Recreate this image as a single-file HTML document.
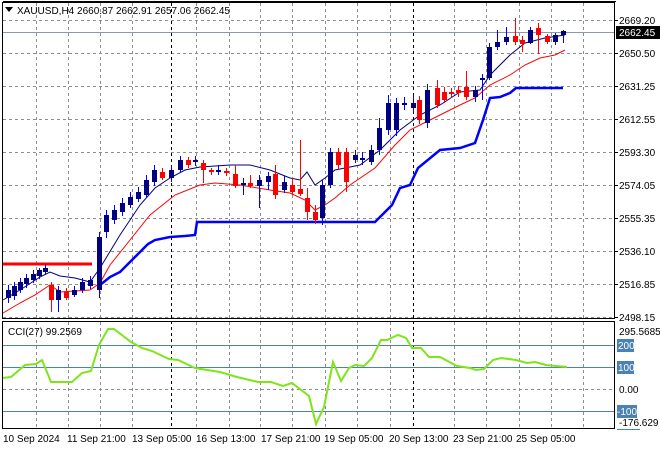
<!DOCTYPE html><html><head><style>
body{margin:0;background:#fff;width:660px;height:450px;overflow:hidden;font-family:"Liberation Sans",sans-serif}
svg text{font-family:"Liberation Sans",sans-serif;font-size:10px;fill:#000}
</style></head><body>
<svg id="s" width="660" height="450" xmlns="http://www.w3.org/2000/svg">
<rect width="660" height="450" fill="#fff"/>
<g id="grid" stroke="#8a8f96" stroke-dasharray="3,3" stroke-width="1"></g>
<line x1="3" y1="32.5" x2="614" y2="32.5" stroke="#8899aa"/>
<line x1="171.5" y1="3" x2="171.5" y2="429" stroke="#000" stroke-dasharray="3,3"/>
<line x1="413.5" y1="3" x2="413.5" y2="429" stroke="#000" stroke-dasharray="3,3"/>
<g stroke="#4a82b4"><line x1="3" y1="345.5" x2="614" y2="345.5"/><line x1="3" y1="367.5" x2="614" y2="367.5"/><line x1="3" y1="411.5" x2="614" y2="411.5"/></g>
<line x1="3" y1="264" x2="92" y2="264" stroke="#f00" stroke-width="3"/>
<polyline fill="none" stroke="#00f" stroke-width="2.5" points="100,285 110,277 120,272 130,262 140,252 148,244 155,240 170,237 185,236 195,235 197,222 375,222 382,215 392,205 400,188 410,185 418,168 440,150 460,148 475,143 483,120 490,98 500,97 510,93 516,88 563,88"/>
<polyline fill="none" stroke="#000080" stroke-width="1" points="3,300 20,290 40,277 50,272 60,276 75,278 90,282 100,268 120,235 140,205 155,188 170,178 185,170 200,167 230,165 250,165 270,170 290,178 300,180 307,172 315,185 325,178 335,170 360,165 380,150 400,130 420,115 440,105 460,92 480,90 490,75 510,55 525,43 545,38 565,35"/>
<polyline fill="none" stroke="#f00" stroke-width="1" points="3,313 20,303 35,295 50,285 60,292 90,290 100,283 110,265 130,240 150,215 175,195 200,185 215,183 240,185 270,190 290,193 305,200 315,210 325,205 335,198 350,185 375,168 395,145 410,130 430,120 460,105 475,98 490,85 510,75 525,65 540,58 555,55 565,50"/>
<g id="c"></g>
<polyline fill="none" stroke="#7fe51a" stroke-width="2" points="2,378 11,377 25,365 36,364 42,360 51,382 72,382 82,373 91,371 99,345 108,329 114,329 131,342 142,348 152,351 169,359 178,360 195,368 220,372 237,377 258,382 271,382 283,386 292,383 309,396 316,424 324,407 333,362 341,381 349,368 355,365 364,366 372,358 381,340 387,340 398,335 406,338 412,348 421,348 429,357 440,357 457,366 470,368 476,370 484,369 493,360 501,358 516,360 527,363 535,362 546,365 567,367"/>
<g fill="none" stroke="#000"><rect x="2.5" y="2.5" width="612" height="316"/><rect x="2.5" y="321.5" width="612" height="107"/></g>
<rect x="3" y="1" width="613" height="1" fill="#000"/>
<polygon points="5,7 13,7 9,12" fill="#000"/>
<text x="17" y="14">XAUUSD,H4  2660.87 2662.91 2657.06 2662.45</text>
<text x="8" y="335">CCI(27) 99.2569</text>
<g id="ax"></g>
<rect x="616" y="26" width="44" height="13" fill="#000"/>
<text x="619" y="36" style="fill:#fff">2662.45</text>
<g>
<text x="619" y="335">295.5685</text>
<rect x="617" y="339" width="17" height="13" fill="#4a82b4"/><text x="618" y="349" style="fill:#fff">200</text>
<rect x="617" y="361" width="17" height="13" fill="#4a82b4"/><text x="618" y="371" style="fill:#fff">100</text>
<text x="619" y="393">0.00</text>
<rect x="617" y="405" width="20" height="13" fill="#4a82b4"/><text x="617" y="415" style="fill:#fff">-100</text>
<text x="619" y="426">-176.629</text>
<line x1="617" y1="429.5" x2="640" y2="429.5" stroke="#4a82b4"/>
</g>
<g>
<text x="3" y="442">10 Sep 2024</text><text x="67" y="442">11 Sep 21:00</text><text x="132" y="442">13 Sep 05:00</text><text x="196" y="442">16 Sep 13:00</text><text x="261" y="442">17 Sep 21:00</text><text x="324" y="442">19 Sep 05:00</text><text x="389" y="442">20 Sep 13:00</text><text x="453" y="442">23 Sep 21:00</text><text x="516" y="442">25 Sep 05:00</text>
</g>
</svg>
<script>
var NS="http://www.w3.org/2000/svg";
function el(p,t,a){var e=document.createElementNS(NS,t);for(var k in a)e.setAttribute(k,a[k]);p.appendChild(e);return e;}
var g=document.getElementById('grid');
var hs=[20,53,86,119,152,185,218,251,284,317];
hs.forEach(function(y){el(g,'line',{x1:3,y1:y+.5,x2:614,y2:y+.5});});
el(g,'line',{x1:3,y1:389.5,x2:614,y2:389.5});
var vs=[36,68,100,132,196,229,260,292,325,357,390,454,486,519,551,583];
vs.forEach(function(x){el(g,'line',{x1:x+.5,y1:3,x2:x+.5,y2:318});el(g,'line',{x1:x+.5,y1:322,x2:x+.5,y2:428});});
var ax=document.getElementById('ax');
var lb=["2669.20","2650.50","2631.25","2612.55","2593.30","2574.05","2555.35","2536.10","2516.85","2498.15"];
hs.forEach(function(y,i){el(ax,'line',{x1:614,y1:y+.5,x2:618,y2:y+.5,stroke:'#000'});var t=el(ax,'text',{x:619,y:y+4});t.textContent=lb[i];});
// x, open, close, high, low
var C=[[8,298,290,285,303],[14,296,286,282,300],[20,290,282,278,293],[26,284,278,274,288],[33,280,274,270,283],[39,276,270,268,279],[45,272,268,264,275],[51,285,300,282,312],[58,300,290,286,312],[66,292,298,288,300],[74,295,290,286,297],[82,290,282,278,293],[90,286,280,276,289],[99,290,237,232,298],[106,232,215,210,238],[114,220,210,205,224],[122,212,203,198,216],[130,205,197,192,208],[138,199,192,187,202],[146,195,180,175,198],[154,182,170,165,186],[162,172,178,168,180],[171,178,170,165,182],[180,170,160,156,172],[188,160,165,157,168],[195,162,160,156,166],[203,163,170,160,183],[211,170,172,168,175],[218,172,170,165,175],[226,171,173,168,176],[235,174,186,165,188],[243,185,183,178,195],[250,183,186,175,188],[259,186,180,175,208],[268,182,176,172,190],[275,174,195,165,199],[284,190,182,176,193],[292,185,192,178,195],[300,189,194,140,196],[307,198,212,188,220],[315,212,220,205,224],[322,218,185,180,225],[330,185,152,148,188],[338,152,165,148,170],[346,152,182,148,192],[355,160,155,150,163],[362,160,158,152,165],[371,162,150,145,165],[379,150,128,118,155],[388,130,103,95,135],[396,130,103,98,136],[404,105,103,97,110],[413,108,103,95,112],[419,100,120,96,124],[427,123,90,84,128],[437,88,105,80,108],[444,92,100,87,103],[451,92,94,88,98],[458,90,93,86,97],[466,87,97,71,100],[475,97,90,86,102],[482,80,78,74,100],[489,78,47,43,80],[497,47,42,30,50],[506,42,37,27,45],[515,36,42,18,45],[522,40,44,36,52],[530,43,30,27,44],[538,28,35,23,54],[547,36,42,34,44],[555,42,35,33,45],[563,35,31,30,43]];
var cg=document.getElementById('c');
C.forEach(function(c){var up=c[2]<c[1];var col=up?'#000080':'#f00';if(!up&&c[0]<60)col='#f00';
el(cg,'line',{x1:c[0]+.5,y1:c[3],x2:c[0]+.5,y2:c[4],stroke:up?'#0000ff':'#f00'});
var t=Math.min(c[1],c[2]),h=Math.max(1,Math.abs(c[1]-c[2]));
el(cg,'rect',{x:c[0]-2,y:t,width:5,height:h,fill:col});});
</script>
</body></html>
